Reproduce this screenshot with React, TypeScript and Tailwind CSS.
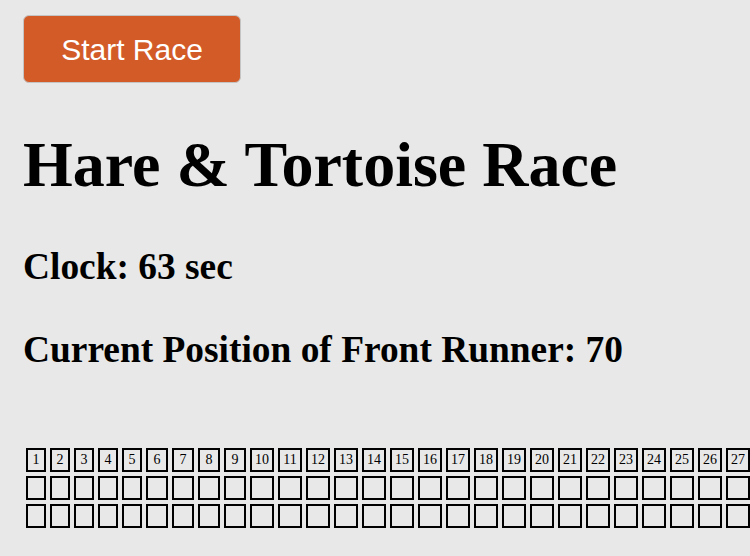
import React from "react";

const cols = Array.from({ length: 100 }, (_, i) => i + 1);

function widthClass(n: number) {
  if (n <= 5) return "w-[20px]";
  if (n <= 9) return "w-[22px]";
  return "w-[24px]";
}

function Row({ labels }: { labels: boolean }) {
  return (
    <div className="flex gap-[4px] shrink-0">
      {cols.map((n) => (
        <div
          key={n}
          className={`${widthClass(n)} h-[24px] shrink-0 border-2 border-black flex items-center justify-center text-[14px] leading-none text-black`}
        >
          {labels ? n : ""}
        </div>
      ))}
    </div>
  );
}

export default function App() {
  return (
    <div
      className="w-[750px] h-[556px] overflow-hidden bg-[#e8e8e8]"
      style={{ fontFamily: '"Liberation Serif", "Times New Roman", serif' }}
    >
      <div className="pl-[23px] pt-[15px]">
        <button
          className="w-[218px] h-[68px] rounded-[6px] border border-[#c4c4c4] bg-[#d35b28] text-white text-[30px] flex items-center justify-center"
          style={{ fontFamily: '"Liberation Sans", Arial, sans-serif' }}
        >
          Start Race
        </button>
        <h1 className="mt-[50px] text-[64px] leading-[64px] font-bold text-black whitespace-nowrap">
          Hare &amp; Tortoise Race
        </h1>
        <h2 className="mt-[51px] text-[37.4px] leading-[37px] font-bold text-black whitespace-nowrap">
          Clock: 63 sec
        </h2>
        <h2 className="mt-[46px] text-[37.4px] leading-[37px] font-bold text-black whitespace-nowrap">
          Current Position of Front Runner: 70
        </h2>
      </div>
      <div className="pl-[26px] mt-[80px] flex flex-col gap-[4px]">
        <Row labels={true} />
        <Row labels={false} />
        <Row labels={false} />
      </div>
    </div>
  );
}
